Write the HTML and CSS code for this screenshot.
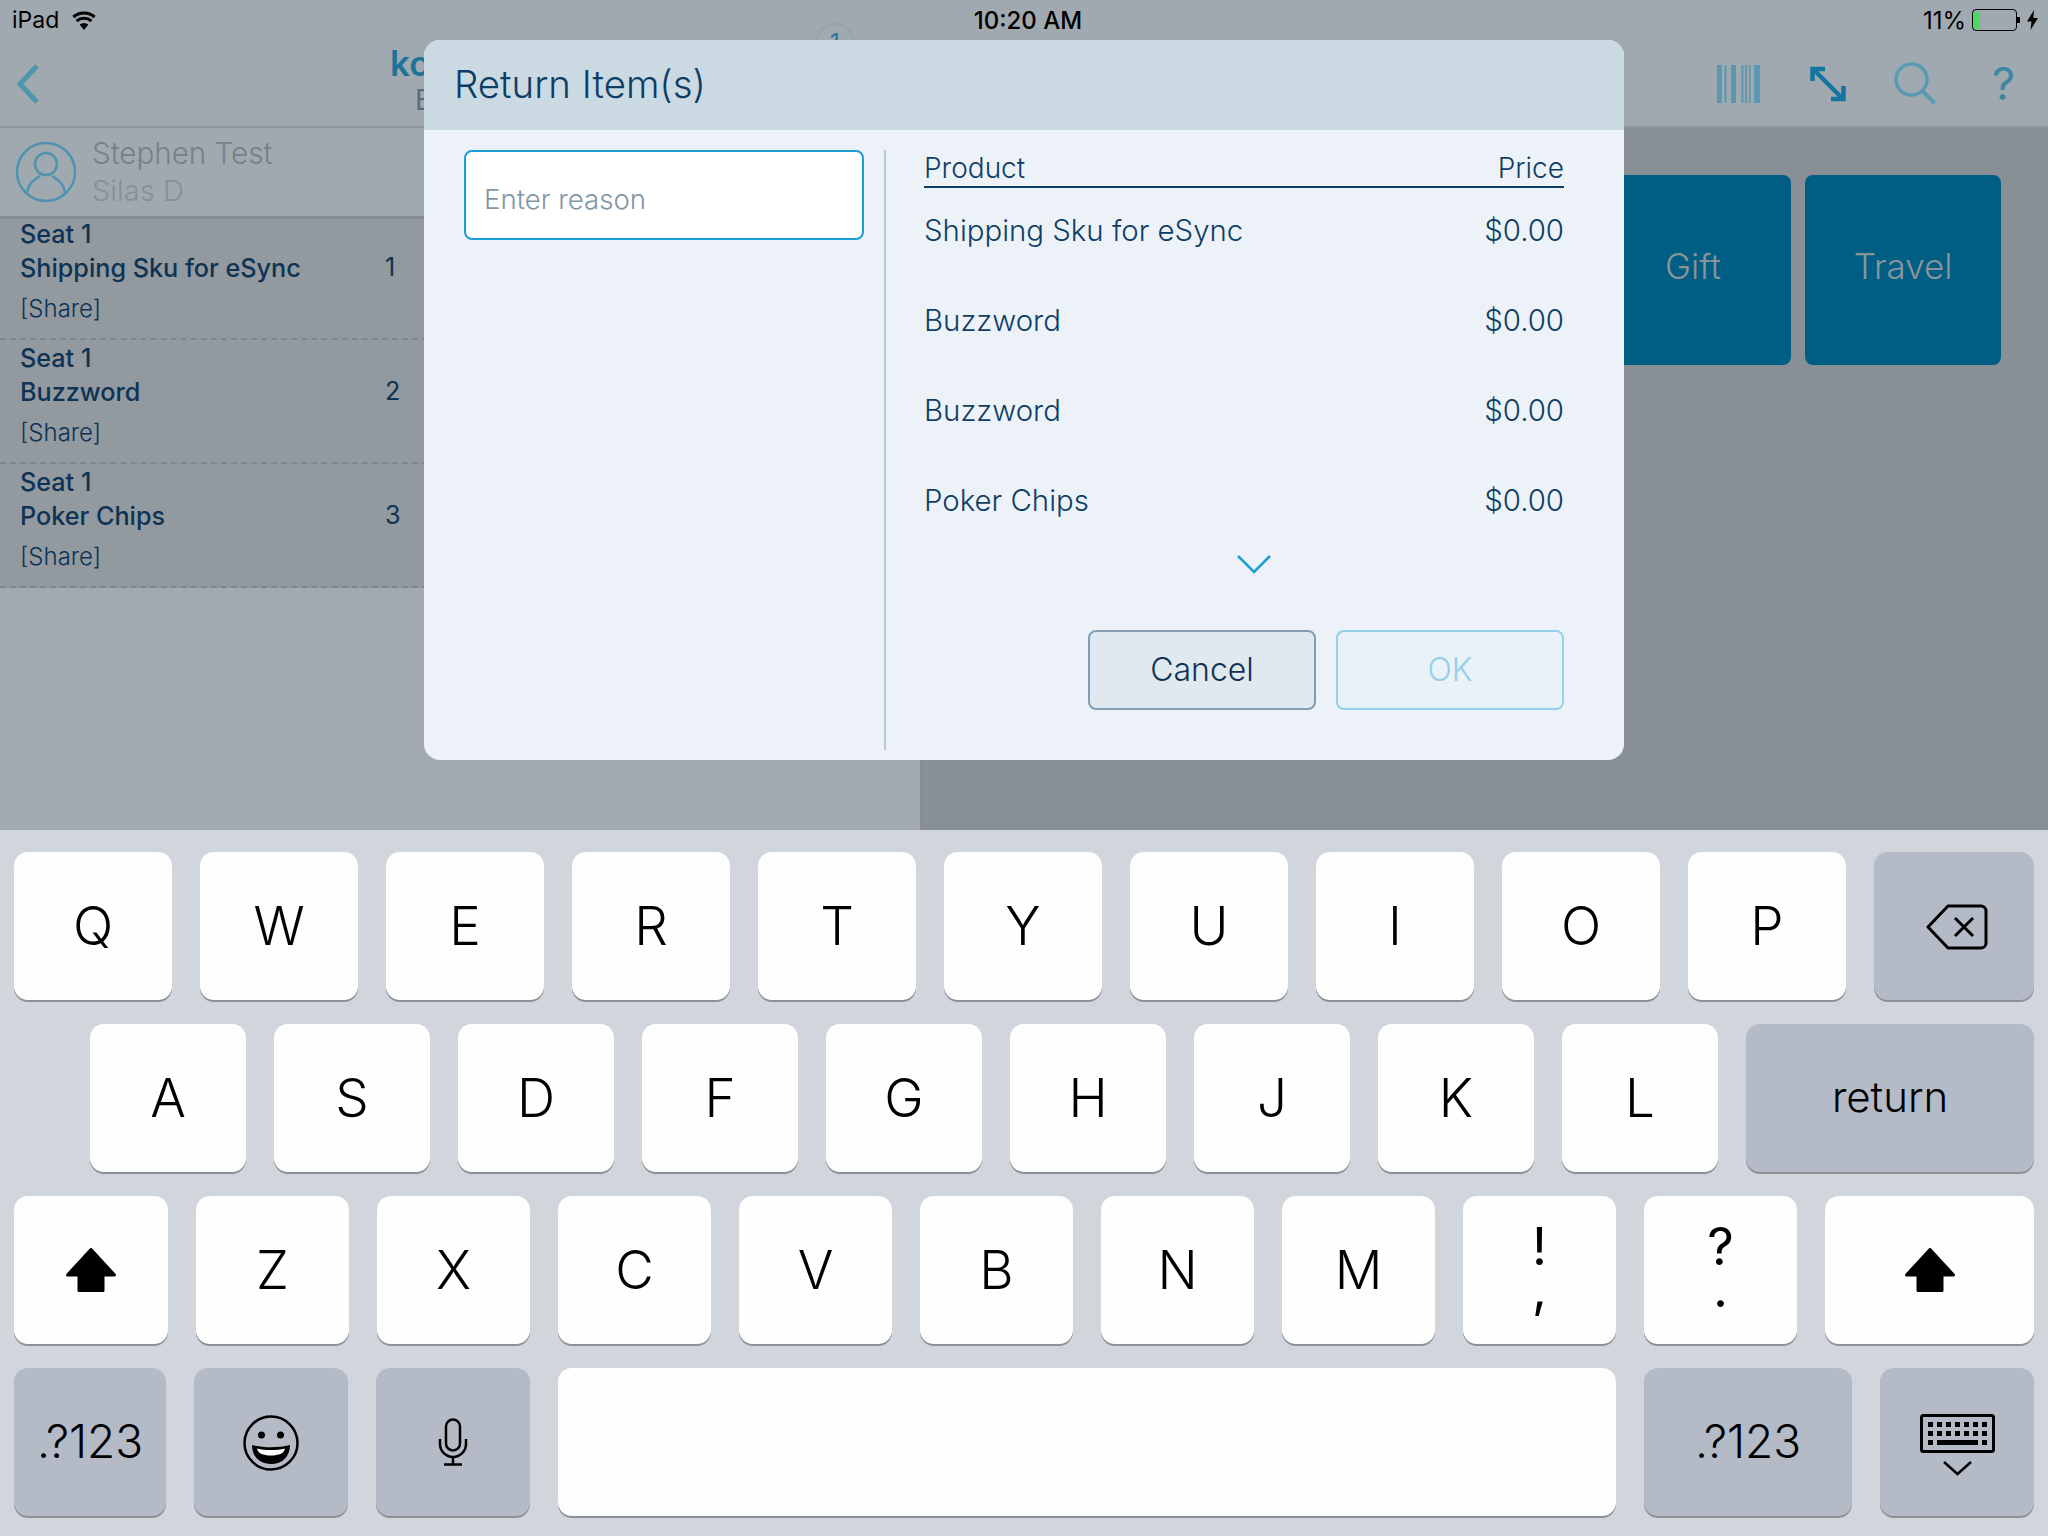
FILE: index.html
```html
<!DOCTYPE html>
<html>
<head>
    <title>Return Items</title>
    <link rel="stylesheet" href="styles.css">
</head>
<body>
    <div class="app">
        <div class="top-bar">
            <div class="status-bar">
                <div class="status-left">
                    <span>iPad</span>
                    <svg class="wifi" viewBox="0 0 26 20"><path d="M13 20 8.6 14.6a6.8 6.8 0 0 1 8.8 0z" fill="#000"/><path d="M5.6 11a11.4 11.4 0 0 1 14.8 0M2.3 7a16.6 16.6 0 0 1 21.4 0" fill="none" stroke="#000" stroke-width="3"/></svg>
                </div>
                <span class="status-time">10:20 AM</span>
                <div class="status-right">
                    <span>11%</span>
                    <div class="battery"><div class="battery-fill"></div></div>
                    <div class="battery-nub"></div>
                    <svg class="bolt" viewBox="0 0 11 20"><path d="M7 0 0 11.500h4.500L3.500 20 11 8H6.300z" fill="#000"/></svg>
                </div>
            </div>
            <div class="nav-bar">
                <svg class="back" viewBox="0 0 24 40"><path d="M21 2 4 20l17 18" fill="none" stroke="#4f94af" stroke-width="5"/></svg>
                <div class="nav-title">
                    <div class="nav-name">ko</div>
                    <div class="nav-sub">E</div>
                </div>
                <div class="nav-badge">1</div>
                <div class="nav-icons">
                    <svg class="icon-barcode" viewBox="0 0 43 38"><path d="M0 0h5v38H0zM7.500 0h2v38h-2zM14 0h5v38h-5zM24.500 0h2v38h-2zM28 0h2v38h-2zM32 0h1.500v38H32zM37 0h6v38h-6z" fill="#5a98b2"/></svg>
                    <svg class="icon-expand" viewBox="0 0 36 36"><path d="M4 4 32 32M2.500 15V3H15M33.500 20v13H21" fill="none" stroke="#14769f" stroke-width="4.500"/></svg>
                    <svg class="icon-search" viewBox="0 0 42 42"><circle cx="17.500" cy="17.500" r="15.500" fill="none" stroke="#5a9ab5" stroke-width="3.500"/><path d="m28.500 29 11 11" fill="none" stroke="#5a9ab5" stroke-width="4" stroke-linecap="round"/></svg>
                    <span class="icon-help">?</span>
                </div>
            </div>
        </div>

        <div class="main">
            <div class="left-panel">
                <div class="customer">
                    <svg class="avatar" viewBox="0 0 60 62"><circle cx="30" cy="31" r="29" fill="none" stroke="#4f94af" stroke-width="2.500"/><circle cx="30" cy="23" r="11" fill="none" stroke="#4f94af" stroke-width="2.500"/><path d="M11 53c1-11 8-15 13-18M49 53c-1-11-8-15-13-18" fill="none" stroke="#4f94af" stroke-width="2.500"/></svg>
                    <div>
                        <div class="customer-name">Stephen Test</div>
                        <div class="customer-sub">Silas D</div>
                    </div>
                </div>
                <div class="line-item">
                    <div class="line-text"><div>Seat 1</div><div>Shipping Sku for eSync</div><div class="share">[Share]</div></div>
                    <span class="line-num">1</span>
                </div>
                <div class="line-item">
                    <div class="line-text"><div>Seat 1</div><div>Buzzword</div><div class="share">[Share]</div></div>
                    <span class="line-num">2</span>
                </div>
                <div class="line-item">
                    <div class="line-text"><div>Seat 1</div><div>Poker Chips</div><div class="share">[Share]</div></div>
                    <span class="line-num">3</span>
                </div>
            </div>
            <div class="right-panel">
                <div class="cat-btn">Gift</div>
                <div class="cat-btn">Travel</div>
            </div>
        </div>

        <div class="modal">
            <div class="modal-header">Return Item(s)</div>
            <div class="modal-body">
                <div class="modal-left">
                    <div class="reason-input">Enter reason</div>
                </div>
                <div class="modal-right">
                    <div class="table-head"><span>Product</span><span>Price</span></div>
                    <div class="table-row"><span>Shipping Sku for eSync</span><span>$0.00</span></div>
                    <div class="table-row"><span>Buzzword</span><span>$0.00</span></div>
                    <div class="table-row"><span>Buzzword</span><span>$0.00</span></div>
                    <div class="table-row"><span>Poker Chips</span><span>$0.00</span></div>
                    <svg class="more" viewBox="0 0 34 20"><path d="M1 2 17 18 33 2" fill="none" stroke="#1a9fd3" stroke-width="2.500"/></svg>
                    <div class="modal-actions">
                        <div class="btn btn-cancel">Cancel</div>
                        <div class="btn btn-ok">OK</div>
                    </div>
                </div>
            </div>
        </div>
    </div>

    <div class="keyboard">
        <div class="kb-row kb-row1">
            <div class="key">Q</div><div class="key">W</div><div class="key">E</div><div class="key">R</div><div class="key">T</div>
            <div class="key">Y</div><div class="key">U</div><div class="key">I</div><div class="key">O</div><div class="key">P</div>
            <div class="key key-gray key-delete">
                <svg class="ic-delete" viewBox="0 0 62 46"><path d="M22 2h33a5 5 0 0 1 5 5v32a5 5 0 0 1-5 5H22L2 23z" fill="none" stroke="#000" stroke-width="3" stroke-linejoin="round"/><path d="m29 14 18 18M47 14 29 32" fill="none" stroke="#000" stroke-width="3"/></svg>
            </div>
        </div>
        <div class="kb-row kb-row2">
            <div class="key">A</div><div class="key">S</div><div class="key">D</div><div class="key">F</div><div class="key">G</div>
            <div class="key">H</div><div class="key">J</div><div class="key">K</div><div class="key">L</div>
            <div class="key key-gray key-return">return</div>
        </div>
        <div class="kb-row kb-row3">
            <div class="key key-shift-l"><svg class="ic-shift" viewBox="0 0 50 44"><path d="M25 1.500 48.500 27H37v15.500H13V27H1.500z" fill="#000" stroke="#000" stroke-width="3" stroke-linejoin="round"/></svg></div>
            <div class="key">Z</div><div class="key">X</div><div class="key">C</div><div class="key">V</div><div class="key">B</div>
            <div class="key">N</div><div class="key">M</div>
            <div class="key key-double"><span>!</span><span>,</span></div>
            <div class="key key-double"><span>?</span><span>.</span></div>
            <div class="key key-shift-r"><svg class="ic-shift" viewBox="0 0 50 44"><path d="M25 1.500 48.500 27H37v15.500H13V27H1.500z" fill="#000" stroke="#000" stroke-width="3" stroke-linejoin="round"/></svg></div>
        </div>
        <div class="kb-row kb-row4">
            <div class="key key-gray key-num-l">.?123</div>
            <div class="key key-gray key-fn">
                <svg class="ic-emoji" viewBox="0 0 56 56"><circle cx="28" cy="28" r="26.500" fill="none" stroke="#000" stroke-width="2.500"/><circle cx="18.500" cy="20" r="3.500"/><circle cx="37.500" cy="20" r="3.500"/><path d="M9 30c12 3 26 3 38 0 0 12-8 19-19 19S9 42 9 30z"/><path d="M14 33.500c9 2 19 2 28 0-1 5-6 7-14 7s-13-2-14-7z" fill="#fff"/></svg>
            </div>
            <div class="key key-gray key-fn">
                <svg class="ic-mic" viewBox="0 0 30 48"><rect x="8" y="1.500" width="14" height="31" rx="7" fill="none" stroke="#000" stroke-width="2.500"/><path d="M2 21v5a13 13 0 0 0 26 0v-5M15 39v7M6 46.500h18" fill="none" stroke="#000" stroke-width="2.500"/></svg>
            </div>
            <div class="key key-space"></div>
            <div class="key key-gray key-num-r">.?123</div>
            <div class="key key-gray key-fn">
                <svg class="ic-keyboard" viewBox="0 0 75 62"><rect x="1.500" y="1.500" width="72" height="36" rx="2" fill="none" stroke="#000" stroke-width="3"/><path d="M8 8h5v5H8zM17 8h5v5h-5zM26 8h5v5h-5zM35 8h5v5h-5zM44 8h5v5h-5zM53 8h5v5h-5zM62 8h5v5h-5zM8 17h5v5H8zM17 17h5v5h-5zM26 17h5v5h-5zM35 17h5v5h-5zM44 17h5v5h-5zM53 17h5v5h-5zM62 17h5v5h-5zM8 26h5v5H8zM17 26h41v5H17zM62 26h5v5h-5z"/><path d="m24 48 13.500 12L51 48" fill="none" stroke="#000" stroke-width="2.500"/></svg>
            </div>
        </div>
    </div>
</body>
</html>
```

FILE: styles.css
```css
html, body { margin: 0; padding: 0; }
body {
    width: 2048px;
    height: 1536px;
    overflow: hidden;
    font-family: Inter, "Noto Sans", sans-serif;
    background: #d1d6dd;
}

.app {
    position: relative;
    height: 830px;
    background: #a3aaaf;
    display: flex;
    flex-direction: column;
}

/* top bars */
.top-bar {
    height: 128px;
    flex: none;
    background: #a0a9af;
    border-bottom: 2px solid #8f969b;
    box-sizing: border-box;
}
.status-bar {
    height: 40px;
    padding: 0 10px 0 12px;
    display: flex;
    align-items: center;
    justify-content: space-between;
    font-size: 23px;
    color: #000;
}
.status-left { width: 300px; display: flex; align-items: center; gap: 12px; }
.status-right { width: 300px; display: flex; align-items: center; justify-content: flex-end; }
.status-right span { font-size: 24px; }
.status-time { font-weight: 500; font-size: 24px; margin-left: 6px; }
.wifi { width: 26px; height: 20px; }
.battery {
    width: 40px;
    height: 17px;
    margin-left: 6px;
    border: 1.500px solid #000;
    border-radius: 4px;
    padding: 1.500px;
}
.battery-fill { width: 6px; height: 100%; background: #4cd964; }
.battery-nub { width: 3px; height: 6px; background: #000; }
.bolt { width: 11px; height: 20px; margin-left: 7px; }

.nav-bar {
    position: relative;
    height: 86px;
    display: flex;
    align-items: center;
}
.back { width: 24px; height: 40px; margin-left: 16px; margin-top: 2px; }
.nav-title { margin-left: 350px; margin-top: -6px; width: 60px; }
.nav-name { font-size: 35px; font-weight: 600; color: #1e7398; line-height: 40px; }
.nav-sub { font-size: 28px; color: #5d6a72; line-height: 34px; margin-left: 25px; }
.nav-badge {
    position: absolute;
    left: 815px;
    top: -17px;
    width: 40px;
    height: 40px;
    box-sizing: border-box;
    border: 2px solid #97a2a9;
    border-radius: 50%;
    text-align: center;
    line-height: 36px;
    font-size: 24px;
    color: #2e7596;
}
.nav-icons { position: absolute; top: 0; left: 1717px; height: 86px; }
.icon-barcode { position: absolute; left: 0; top: 25px; width: 43px; height: 38px; }
.icon-expand { position: absolute; left: 93px; top: 26px; width: 36px; height: 36px; }
.icon-search { position: absolute; left: 177px; top: 22px; width: 42px; height: 42px; }
.icon-help { position: absolute; left: 275px; top: 19px; font-size: 45px; line-height: 50px; color: #3f86a5; }

/* background panels */
.main { flex: 1; display: flex; }
.left-panel { width: 920px; flex: none; }
.customer {
    height: 88px;
    display: flex;
    align-items: center;
    gap: 16px;
    padding-left: 16px;
    background: #a0a9af;
}
.avatar { width: 60px; height: 62px; }
.customer-name { font-size: 29.6px; font-weight: 350; color: #74818a; line-height: 37px; }
.customer-sub { font-size: 29px; font-weight: 350; color: #85909a; line-height: 37px; }
.line-item {
    height: 124px;
    box-sizing: border-box;
    padding: 1px 400px 0 20px;
    display: flex;
    align-items: flex-start;
    background: #92999f;
    border-bottom: 2px dashed #7f878e;
    font-size: 25.2px;
    font-weight: 500;
    color: #0e3355;
}
.customer + .line-item { box-shadow: inset 0 3px 0 #868d93; }
.line-text { width: 365px; line-height: 34px; }
.share { font-weight: 350; font-size: 24px; margin-top: 7px; }
.line-num { font-weight: 400; line-height: 34px; margin-top: 33px; }

.right-panel {
    flex: 1;
    background: #899095;
    display: flex;
    justify-content: flex-end;
    gap: 14px;
    padding: 47px 47px 0 0;
    border-left: 2px solid #878d8f;
    align-items: flex-start;
}
.cat-btn {
    width: 196px;
    height: 190px;
    box-sizing: border-box;
    padding-bottom: 8px;
    background: #005e84;
    border-radius: 8px;
    display: flex;
    align-items: center;
    justify-content: center;
    font-size: 35px;
    font-weight: 300;
    color: #8a9499;
}

/* dialog */
.modal {
    position: absolute;
    left: 424px;
    top: 40px;
    width: 1200px;
    height: 720px;
    border-radius: 16px;
    overflow: hidden;
    background: #edf2f8;
    color: #0e3e66;
}
.modal-header {
    height: 90px;
    background: #cbd9e2;
    padding-left: 30px;
    line-height: 88px;
    font-size: 38.4px;
    font-weight: 350;
}
.modal-body { display: flex; height: 600px; margin-top: 20px; }
.modal-left { width: 400px; margin-left: 40px; margin-right: 20px; }
.reason-input {
    height: 90px;
    box-sizing: border-box;
    border: 2px solid #1a9fd3;
    border-radius: 8px;
    background: #fff;
    padding-left: 18px;
    line-height: 94px;
    font-size: 27.6px;
    font-weight: 300;
    color: #7f96a8;
}
.modal-right {
    flex: 1;
    border-left: 2px solid #b5c6d3;
    padding: 0 60px 0 38px;
}
.table-head {
    height: 38px;
    box-sizing: border-box;
    border-bottom: 2px solid #0e3e66;
    display: flex;
    justify-content: space-between;
    font-size: 28px;
    font-weight: 350;
    line-height: 36px;
}
.table-row {
    height: 90px;
    display: flex;
    justify-content: space-between;
    align-items: flex-start;
    font-size: 29.4px;
    font-weight: 350;
    line-height: 86px;
}
.more { display: block; width: 34px; height: 20px; margin: 6px 0 0 313px; }
.modal-actions { display: flex; justify-content: flex-end; gap: 20px; margin-top: 56px; }
.btn {
    width: 228px;
    height: 80px;
    box-sizing: border-box;
    border-radius: 8px;
    text-align: center;
    line-height: 76px;
    font-size: 32px;
    font-weight: 350;
}
.btn-cancel { background: #e0e9f0; border: 2px solid #849db2; color: #0e3355; }
.btn-ok { background: #e9f2f8; border: 2px solid #94d0ea; color: #94d0ea; }

/* keyboard */
.keyboard {
    height: 706px;
    box-sizing: border-box;
    padding-top: 22px;
    display: flex;
    flex-direction: column;
    gap: 24px;
    background: #d1d6dd;
}
.kb-row { display: flex; height: 148px; padding-left: 14px; gap: 28px; }
.kb-row2 { padding-left: 90px; }
.key {
    height: 148px;
    flex: none;
    width: 158px;
    border-radius: 14px;
    background: #fefefe;
    box-shadow: 0 2px 0 #8e9097;
    display: flex;
    align-items: center;
    justify-content: center;
    font-size: 53px;
    font-weight: 350;
    color: #000;
}
.key-gray { background: #b4bbc7; }
.key-delete { width: 160px; }
.kb-row2 .key { width: 156px; }
.kb-row2 .key-return { width: 288px; font-size: 42px; padding-bottom: 4px; box-sizing: border-box; }
.kb-row3 .key { width: 153px; }
.kb-row3 .key-shift-l { width: 154px; }
.kb-row3 .key-shift-r { width: 209px; }
.key-double { flex-direction: column; font-size: 52px; line-height: 42px; padding-bottom: 4px; box-sizing: border-box; font-weight: 400; }
.key-num-l { width: 152px; font-size: 46px; padding-bottom: 2px; box-sizing: border-box; }
.key-num-r { width: 208px; font-size: 46px; padding-bottom: 2px; box-sizing: border-box; }
.key-fn { width: 154px; }
.key-space { width: 1058px; }
.ic-delete { width: 62px; height: 46px; margin-left: 5px; margin-top: 2px; }
.ic-shift { width: 50px; height: 44px; }
.ic-emoji { width: 56px; height: 56px; margin-top: 2px; }
.ic-mic { width: 30px; height: 48px; }
.ic-keyboard { width: 75px; height: 62px; margin-top: 6px; }
```
